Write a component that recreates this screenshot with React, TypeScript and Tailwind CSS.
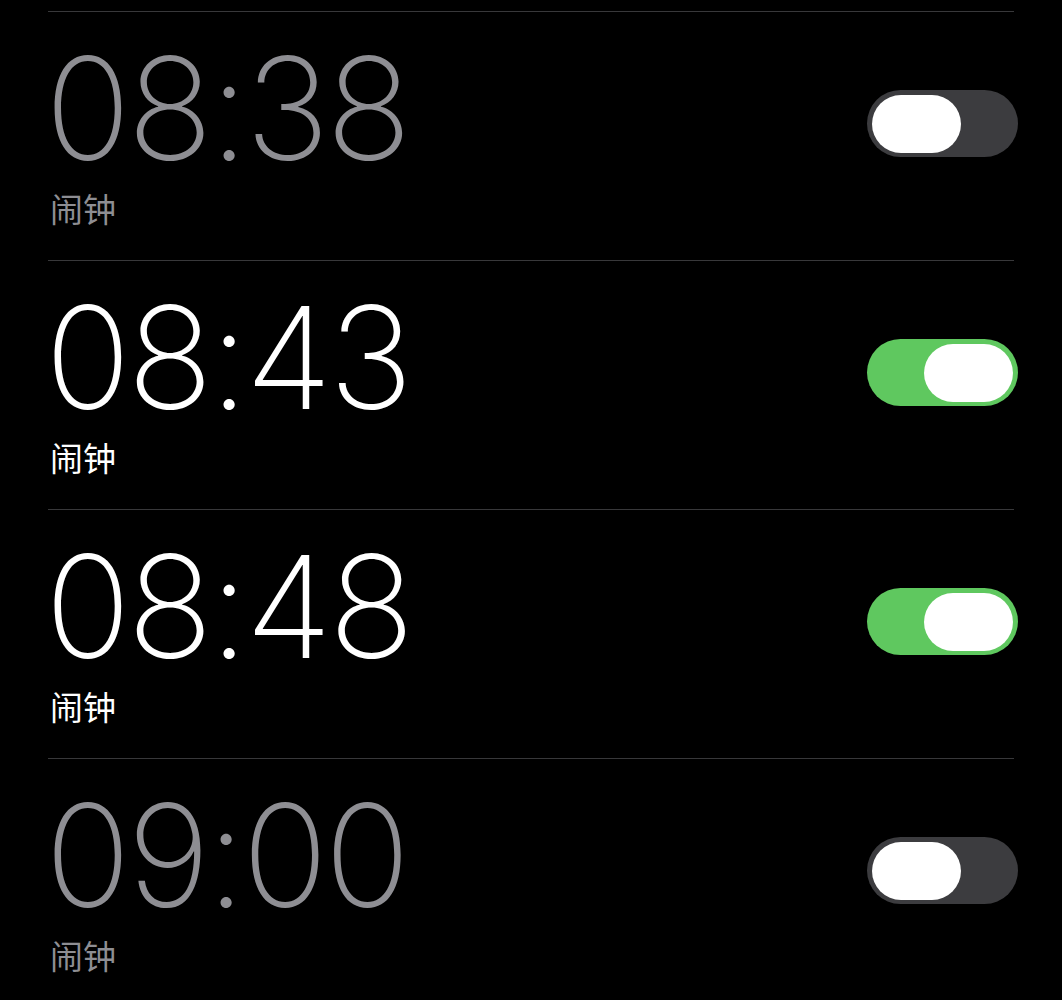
import React from "react";

const alarms = [
  { time: "08:38", on: false },
  { time: "08:43", on: true },
  { time: "08:48", on: true },
  { time: "09:00", on: false },
];

function Toggle({ on }: { on: boolean }) {
  return (
    <div
      className={
        "flex h-[67px] w-[151px] items-center rounded-full px-[5px] " +
        (on ? "justify-end bg-[#5fc85f]" : "justify-start bg-[#3c3c3f]")
      }
    >
      <div className="h-[58px] w-[89px] rounded-full bg-white" />
    </div>
  );
}

export default function App() {
  return (
    <div
      className="min-h-[1000px] w-[1062px] overflow-hidden bg-black pt-[11px]"
      style={{ fontFamily: "Inter, 'Noto Sans CJK SC', sans-serif" }}
    >
      {alarms.map((a) => (
        <div key={a.time} className="mx-[48px] border-t border-[#38383a]">
          <div className="flex h-[248px] items-start justify-between">
            <div className="flex flex-col pt-[40px]">
              <div
                className={
                  "ml-[-3px] text-[142px] font-[160] leading-[0.8] tracking-[-3.5px] " +
                  (a.on ? "text-white" : "text-[#8e8e93]")
                }
              >
                {a.time}
              </div>
              <div
                className={
                  "ml-[2px] mt-[26px] text-[33px] leading-none " +
                  (a.on ? "text-white" : "text-[#8e8e93]")
                }
                style={{ fontFamily: "'Noto Sans CJK SC', sans-serif" }}
              >
                闹钟
              </div>
            </div>
            <div className="mr-[-4px] mt-[78px]">
              <Toggle on={a.on} />
            </div>
          </div>
        </div>
      ))}
    </div>
  );
}
